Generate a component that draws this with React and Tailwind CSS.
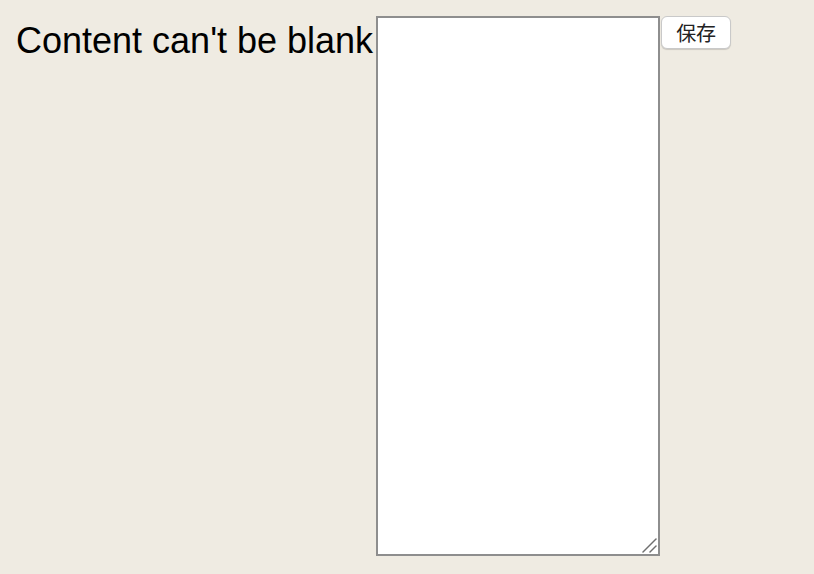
import React from 'react';

const App = () => {
  return (
    <div className="min-h-[574px] bg-[#efebe2] p-4 flex items-start" style={{ fontFamily: '"Liberation Sans", "Noto Sans CJK JP", sans-serif' }}>
      <span className="mt-[4px] text-[36px] leading-[41px] text-black whitespace-nowrap">Content can't be blank</span>
      <div className="relative ml-[3px] w-[284px] h-[540px]">
        <textarea
          className="block w-full h-full bg-white border-2 border-[#8e8e8e] outline-none resize-none"
          defaultValue=""
        />
        {/* resize grip */}
        <svg className="absolute right-[3px] bottom-[3px]" width="16" height="16" viewBox="0 0 16 16">
          <line x1="2" y1="15" x2="15" y2="2" stroke="#6f6f6f" strokeWidth="1.5" strokeLinecap="round" />
          <line x1="9" y1="15" x2="15" y2="9" stroke="#6f6f6f" strokeWidth="1.5" strokeLinecap="round" />
        </svg>
      </div>
      <button className="ml-px pt-[3px] h-[33px] w-[70px] bg-white border border-[#c9c9c9] rounded-[6px] shadow-[0_1px_1px_rgba(0,0,0,0.15)] text-[20px] text-[#222] leading-none">
        保存
      </button>
    </div>
  );
};

export default App;
